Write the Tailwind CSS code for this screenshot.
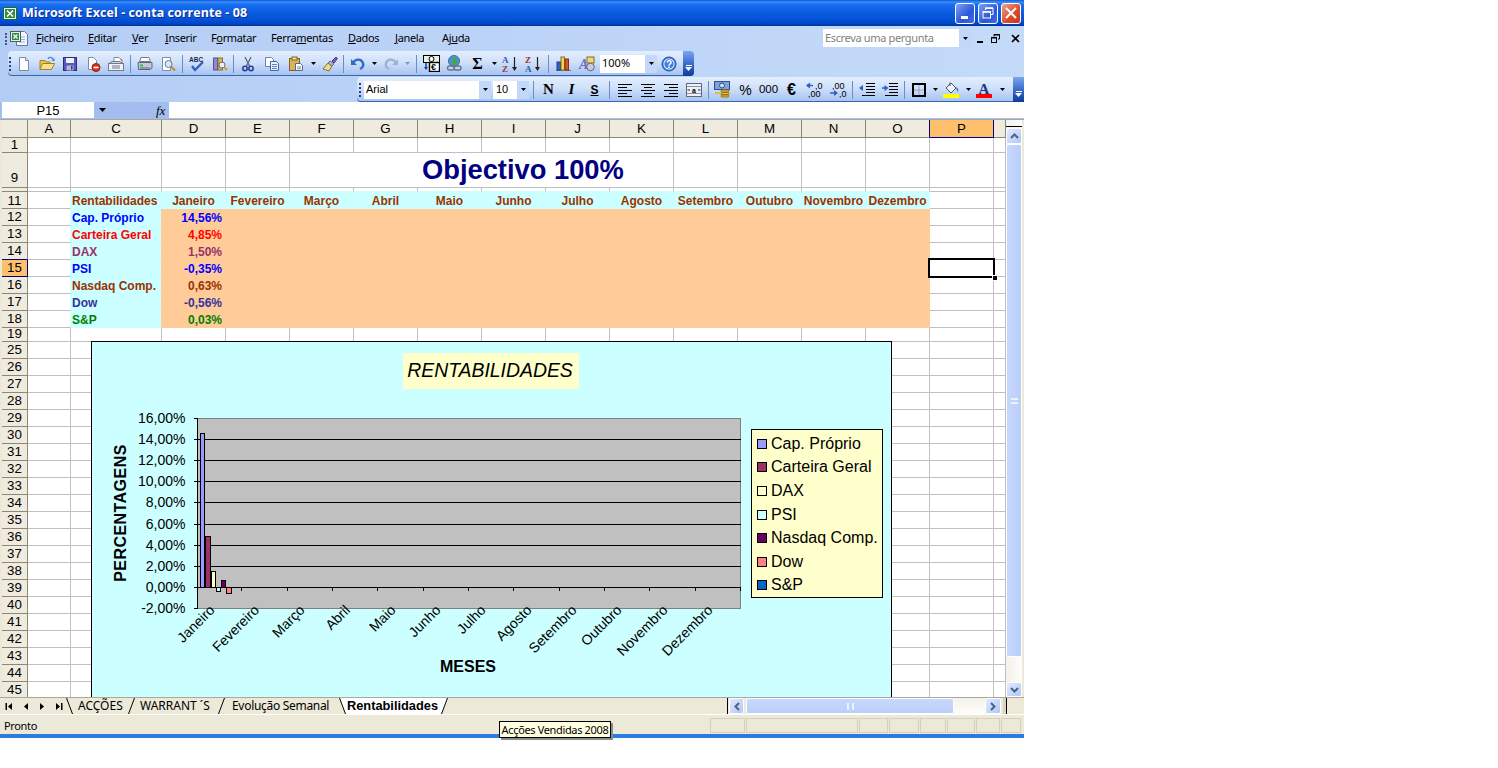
<!DOCTYPE html>
<html lang="pt">
<head>
<meta charset="utf-8">
<title>Microsoft Excel - conta corrente - 08</title>
<script src="https://cdn.jsdelivr.net/npm/@tailwindcss/browser@4"></script>
</head>
<body class="bg-white font-['Liberation_Sans',sans-serif] text-black">
<div class="relative w-[1498px] h-[768px] overflow-hidden bg-white">
<div class="w-[1024px] h-[738px] flex flex-col bg-[linear-gradient(90deg,#b4cdf5,#c4daf9)]">

<!-- title bar -->
<div class="h-[26px] flex items-center bg-[linear-gradient(180deg,#0a5ad8_0,#3c8dfb_8%,#1a6ff0_16%,#0a5be0_50%,#0552d8_75%,#0047c8_90%,#00339a_100%)]">
  <svg class="w-[14px] h-[13px] ml-[3px]" viewBox="0 0 14 13"><rect x=".5" y=".5" width="13" height="12" fill="#f0f8ea" stroke="#1d6b2e"/><rect x="2" y="2" width="10" height="9" fill="#2f8f46"/><path d="M4 3.500l6 6M10 3.500l-6 6" stroke="#fff" stroke-width="1.600"/></svg>
  <span class="ml-[5px] text-white font-['Open_Sans',sans-serif] font-bold text-[12.5px] tracking-[0.07px] whitespace-nowrap [text-shadow:1px_1px_#0f2a89]">Microsoft Excel - conta corrente - 08</span>
  <div class="ml-auto mr-[3px] flex gap-[3px]">
    <span class="w-[20px] h-[21px] rounded-[3px] border border-white bg-[linear-gradient(135deg,#7fa2f5,#2a57d8_60%,#3f6de6)] flex items-end pl-[5px] pb-[4px]"><i class="block w-[7px] h-[3px] bg-white"></i></span>
    <span class="w-[20px] h-[21px] rounded-[3px] border border-white bg-[linear-gradient(135deg,#7fa2f5,#2a57d8_60%,#3f6de6)] flex items-center justify-center"><svg class="w-[12px] h-[12px]" viewBox="0 0 12 12" fill="none" stroke="#fff"><path d="M3.500 3V1h7.500v6.500H9" stroke-width="1"/><path d="M3 1.200h8" stroke-width="1.600"/><rect x="1" y="4.500" width="7.500" height="6.500" stroke-width="1"/><path d="M1 5h7.500" stroke-width="1.600"/></svg></span>
    <span class="w-[20px] h-[21px] rounded-[3px] border border-white bg-[linear-gradient(135deg,#f0a38c,#d9492a_60%,#c93a1c)] flex items-center justify-center"><svg class="w-[12px] h-[12px]" viewBox="0 0 12 12" stroke="#fff" stroke-width="2"><path d="M1 1l10 10M11 1L1 11"/></svg></span>
  </div>
</div>

<!-- menu bar -->
<div class="h-[25px] flex items-center text-[11px] tracking-[-0.35px] font-['Noto_Sans',sans-serif] text-black">
  <span class="ml-[5px] w-[2px] h-[12px] border-l-2 border-dotted border-[#39568e]"></span>
  <svg class="ml-[3px] w-[18px] h-[17px]" viewBox="0 0 18 17"><path d="M6.500 1.500h8l3 3v11h-11z" fill="#f4f7fc" stroke="#66789a"/><path d="M9 7h6M9 9.500h6M9 12h6" stroke="#9fb0cc"/><rect x=".5" y="1.500" width="10" height="10" fill="#e6f2e0" stroke="#4f5b66"/><rect x="2" y="3" width="7" height="7" fill="#2d8f45"/><path d="M3.500 4.500l4 4M7.500 4.500l-4 4" stroke="#fff" stroke-width="1.200"/></svg>
  <span class="ml-[8px] w-[52px]"><u>F</u>icheiro</span>
  <span class="w-[44px]"><u>E</u>ditar</span>
  <span class="w-[33px]"><u>V</u>er</span>
  <span class="w-[46px]"><u>I</u>nserir</span>
  <span class="w-[60px]">F<u>o</u>rmatar</span>
  <span class="w-[77px]">Ferra<u>m</u>entas</span>
  <span class="w-[47px]"><u>D</u>ados</span>
  <span class="w-[47px]"><u>J</u>anela</span>
  <span class="w-[50px]">Aj<u>u</u>da</span>
  <div class="ml-[331px] w-[148px] h-[18px] bg-white flex items-center justify-between text-[#7f7f7f] pl-[2px] mt-[-1px]">
    <span>Escreva uma pergunta</span>
    <span class="w-[12px] h-full bg-[#c3d8f8] flex items-center justify-center"><svg class="w-[5px] h-[3px]" viewBox="0 0 5 3"><path d="M0 0h5L2.500 3z"/></svg></span>
  </div>
  <svg class="ml-[5px] w-[9px] h-[9px]" viewBox="0 0 9 9"><path d="M1 7h6v2H1z"/></svg>
  <svg class="ml-[6px] w-[9px] h-[9px]" viewBox="0 0 9 9" fill="none" stroke="#000"><path d="M3 2.500V.5h5.500v4.500H7"/><path d="M3 1h5.500" /><rect x=".5" y="3.500" width="5" height="5"/><path d="M.5 4h5"/></svg>
  <svg class="ml-[11px] w-[9px] h-[9px]" viewBox="0 0 9 9" stroke="#000" stroke-width="1.700"><path d="M1 1l7 7M8 1L1 8"/></svg>
</div>

<!-- standard toolbar -->
<div class="ml-[8px] w-[686px] h-[25px] flex items-center rounded-[4px] shadow-[inset_0_-1px_#3d64a8] bg-[linear-gradient(180deg,#e4effe,#cfe0fa_45%,#a3c1f0)] text-[11px]">
  <span class="ml-[1px] w-[3px] h-[14px] border-l-2 border-dotted border-[#27418a]"></span>
  <span class="w-[23px] flex justify-center"><svg class="size-4" viewBox="0 0 16 16"><path d="M3.500 1.500h6l3 3v10h-9z" fill="#fff" stroke="#7d8ca6"/><path d="M9.500 1.500v3h3" fill="#dfe7f5" stroke="#7d8ca6"/></svg></span>
  <span class="w-[23px] flex justify-center"><svg class="size-4" viewBox="0 0 16 16"><path d="M1 13.500V4.500h5l1 1.500h4v1.500" fill="#f0c850" stroke="#a5802a"/><path d="M1 13.500l2.500-6h12l-3 6z" fill="#fbe08a" stroke="#a5802a"/><path d="M9 3c1-2 3-2 4.500-.5l1 1.500" fill="none" stroke="#4a7fd0" stroke-width="1.200"/><path d="M15.500 2v3h-3z" fill="#4a7fd0"/></svg></span>
  <span class="w-[23px] flex justify-center"><svg class="size-4" viewBox="0 0 16 16"><rect x="1.500" y="1.500" width="13" height="13" fill="#5858bd" stroke="#2b2b80"/><rect x="4" y="2" width="8" height="5" fill="#eef1fb"/><rect x="4.500" y="9.500" width="7" height="5" fill="#b6b9d4"/><rect x="9" y="10" width="1.500" height="3.500" fill="#33337f"/></svg></span>
  <span class="w-[23px] flex justify-center"><svg class="size-4" viewBox="0 0 16 16"><path d="M3.500 1.500h5l3 3v9h-8z" fill="#fff" stroke="#7d8ca6"/><circle cx="11" cy="11.500" r="4" fill="#d8321e" stroke="#8e1d10"/><path d="M8.500 11.500h5" stroke="#fff" stroke-width="1.600"/></svg></span>
  <span class="w-[23px] flex justify-center"><svg class="size-4" viewBox="0 0 16 16"><path d="M6 1.500h5l3 3v4H6z" fill="#fff" stroke="#7d8ca6"/><path d="M1 7.500l3-2h8l3 2" fill="#d5dbe6" stroke="#6f7a8e"/><rect x=".5" y="7.500" width="15" height="7" fill="#eef1f7" stroke="#6f7a8e"/><path d="M4 10h8M4 12h8" stroke="#6f7a8e"/><path d="M12 3h2v2" fill="#e05030"/></svg></span>
  <span class="w-[6px] flex justify-center"><i class="block w-[1px] h-[18px] bg-[#6a8cc8]"></i></span>
  <span class="w-[23px] flex justify-center"><svg class="size-4" viewBox="0 0 16 16"><path d="M4 1.500h8l1.500 4h-11z" fill="#fff" stroke="#6f7a8e"/><path d="M1 6.500h14v5.500l-2 1.500H1.500z" fill="#c3c9d6" stroke="#5d6678"/><rect x="3" y="8.500" width="3" height="2" fill="#27c44a"/><path d="M3 12h10" stroke="#5d6678"/></svg></span>
  <span class="w-[23px] flex justify-center"><svg class="size-4" viewBox="0 0 16 16"><path d="M2.500 1.500h8v13h-8z" fill="#fff" stroke="#7d8ca6"/><circle cx="8.500" cy="8" r="3.500" fill="#d7e6fb" stroke="#6a7a98"/><path d="M11 10.500l4 4" stroke="#c98a24" stroke-width="2.200"/></svg></span>
  <span class="w-[6px] flex justify-center"><i class="block w-[1px] h-[18px] bg-[#6a8cc8]"></i></span>
  <span class="w-[23px] flex justify-center"><svg class="size-4" viewBox="0 0 16 16"><text x="0" y="6" font-size="6.500" font-weight="700" fill="#1c2a4a" font-family="Liberation Sans">ABC</text><path d="M3 10l3 4 8-8" fill="none" stroke="#2f5fc4" stroke-width="2.400"/></svg></span>
  <span class="w-[23px] flex justify-center"><svg class="size-4" viewBox="0 0 16 16"><rect x="1.500" y="2" width="4" height="12" fill="#8d8ad0" stroke="#55548e"/><rect x="6" y="2" width="4.500" height="12" fill="#d7b75b" stroke="#8a7230"/><circle cx="10" cy="9" r="3" fill="#e6effb" stroke="#667"/><path d="M12 11l3 3" stroke="#d09a2c" stroke-width="2"/></svg></span>
  <span class="w-[5px] flex justify-center"><i class="block w-[1px] h-[18px] bg-[#6a8cc8]"></i></span>
  <span class="w-[24px] flex justify-center"><svg class="size-4" viewBox="0 0 16 16" fill="none"><path d="M5 1l4.500 9M11 1L6.500 10" stroke="#5c6475" stroke-width="1.300"/><circle cx="5" cy="12.500" r="2.200" stroke="#27379a" stroke-width="1.500"/><circle cx="11" cy="12.500" r="2.200" stroke="#27379a" stroke-width="1.500"/></svg></span>
  <span class="w-[24px] flex justify-center"><svg class="size-4" viewBox="0 0 16 16"><path d="M1.500 1.500h6l2 2v7h-8z" fill="#fff" stroke="#6884b6"/><path d="M6.500 5.500h6l2 2v7h-8z" fill="#e9f1fd" stroke="#3f66ae"/><path d="M8 8.500h5M8 10.500h5M8 12.500h5" stroke="#5d84c6"/></svg></span>
  <span class="w-[24px] flex justify-center"><svg class="size-4" viewBox="0 0 16 16"><rect x="1.500" y="2.500" width="10" height="12" fill="#dcb25a" stroke="#82601e"/><rect x="4" y="1" width="5" height="3" fill="#f0e2ae" stroke="#82601e"/><path d="M7.500 7.500h5l2 2v5h-7z" fill="#fff" stroke="#5a6a88"/><path d="M9 11h4M9 12.800h4" stroke="#7d8ca6"/></svg></span>
  <span class="w-[10px] flex justify-center"><svg class="w-[5px] h-[3px]" viewBox="0 0 5 3"><path d="M0 0h5L2.500 3z"/></svg></span>
  <span class="w-[23px] flex justify-center"><svg class="size-4" viewBox="0 0 16 16"><path d="M1 13l5-6 4 3-3 5z" fill="#f2d98a" stroke="#8a7230"/><path d="M6 7l2-2 4 3-2 2z" fill="#b9b9cc" stroke="#66668a"/><path d="M10 5l4-4 1.500 1.500L12 7z" fill="#7a62ba" stroke="#49387e"/></svg></span>
  <span class="w-[5px] flex justify-center"><i class="block w-[1px] h-[18px] bg-[#6a8cc8]"></i></span>
  <span class="w-[23px] flex justify-center"><svg class="size-4" viewBox="0 0 16 16" fill="none"><path d="M3 7c2-4 8-5 10 0 1 3-1 5-3 6" stroke="#2f6ccc" stroke-width="2.400"/><path d="M1 3v6h6z" fill="#2f6ccc"/></svg></span>
  <span class="w-[10px] flex justify-center"><svg class="w-[5px] h-[3px]" viewBox="0 0 5 3"><path d="M0 0h5L2.500 3z"/></svg></span>
  <span class="w-[23px] flex justify-center"><svg class="size-4" viewBox="0 0 16 16" fill="none"><path d="M13 7C11 3 5 2 3 7c-1 3 1 5 3 6" stroke="#9db3d4" stroke-width="2.400"/><path d="M15 3v6H9z" fill="#9db3d4"/></svg></span>
  <span class="w-[10px] flex justify-center"><svg class="w-[5px] h-[3px]" viewBox="0 0 5 3"><path d="M0 0h5L2.500 3z" fill="#8397b8"/></svg></span>
  <span class="w-[8px] flex justify-center"><i class="block w-[1px] h-[18px] bg-[#6a8cc8]"></i></span>
  <span class="w-[23px] flex justify-center"><svg class="w-[17px] h-[17px]" viewBox="0 0 17 17"><rect x=".5" y=".5" width="16" height="7" fill="#e8f2e4" stroke="#000"/><circle cx="8.500" cy="4" r="2.500" fill="#fff" stroke="#000"/><path d="M3 8v6" stroke="#1c3bb0" stroke-width="1.500"/><path d="M1 12h4l-2 3z" fill="#1c3bb0"/><rect x="6.500" y="7.500" width="10" height="9" fill="#fff" stroke="#000" stroke-width="1.400"/><text x="8" y="15" font-size="9" font-weight="700" font-family="Liberation Sans">€</text></svg></span>
  <span class="w-[23px] flex justify-center"><svg class="w-[17px] h-[17px]" viewBox="0 0 17 17" fill="none"><circle cx="8" cy="6" r="5.500" fill="#4c94d8" stroke="#3b6ca8"/><path d="M5 2c2 1 3 3 1 5s1 3 3 4c2-2 3-5 1-8" fill="#47a84a"/><rect x="1.500" y="11" width="7" height="4" rx="2" stroke="#69748a" stroke-width="1.400"/><rect x="8" y="11" width="7" height="4" rx="2" stroke="#69748a" stroke-width="1.400"/></svg></span>
  <span class="w-[23px] flex justify-center font-['Liberation_Serif',serif] font-bold text-[16px] leading-none">Σ</span>
  <span class="w-[10px] flex justify-center"><svg class="w-[5px] h-[3px]" viewBox="0 0 5 3"><path d="M0 0h5L2.500 3z"/></svg></span>
  <span class="w-[23px] flex justify-center"><svg class="w-[17px] h-[18px]" viewBox="0 0 17 18"><text x="0" y="8" font-size="9" font-weight="700" fill="#2b5aa8" font-family="Liberation Serif">A</text><text x="0" y="17" font-size="9" font-weight="700" fill="#a5332e" font-family="Liberation Serif">Z</text><path d="M12.500 2v13" stroke="#222" stroke-width="1.200"/><path d="M10 12h5l-2.500 4z" fill="#222"/></svg></span>
  <span class="w-[23px] flex justify-center"><svg class="w-[17px] h-[18px]" viewBox="0 0 17 18"><text x="0" y="8" font-size="9" font-weight="700" fill="#a5332e" font-family="Liberation Serif">Z</text><text x="0" y="17" font-size="9" font-weight="700" fill="#2b5aa8" font-family="Liberation Serif">A</text><path d="M12.500 2v13" stroke="#222" stroke-width="1.200"/><path d="M10 12h5l-2.500 4z" fill="#222"/></svg></span>
  <span class="w-[7px] flex justify-center"><i class="block w-[1px] h-[18px] bg-[#6a8cc8]"></i></span>
  <span class="w-[23px] flex justify-center"><svg class="w-[17px] h-[17px]" viewBox="0 0 17 17"><path d="M1 15.500h15" stroke="#6b7690"/><rect x="2" y="7" width="3.500" height="8" fill="#2d62c6" stroke="#243a80"/><rect x="6" y="2" width="3.500" height="13" fill="#f3d94c" stroke="#7f7020"/><rect x="10" y="4" width="3.500" height="11" fill="#e25030" stroke="#81301c"/></svg></span>
  <span class="w-[23px] flex justify-center"><svg class="w-[18px] h-[17px]" viewBox="0 0 18 17"><text x="1" y="14" font-size="14" font-weight="700" font-style="italic" fill="#6a6ec8" font-family="Liberation Serif">A</text><rect x="9" y="2" width="7" height="6" fill="#f0d878" stroke="#7f7020"/><circle cx="12.500" cy="12" r="3.800" fill="#c8ccd8" stroke="#667"/></svg></span>
  <div class="ml-[2px] w-[57px] h-[18px] bg-white flex items-center justify-between pl-[2px] font-['Noto_Sans',sans-serif]"><span>100%</span><span class="w-[12px] h-full bg-[#c3d8f8] flex items-center justify-center"><svg class="w-[5px] h-[3px]" viewBox="0 0 5 3"><path d="M0 0h5L2.500 3z"/></svg></span></div>
  <span class="w-[23px] flex justify-center"><svg class="size-4" viewBox="0 0 16 16"><circle cx="8" cy="8" r="7" fill="#3f7fe0" stroke="#214f9e"/><circle cx="8" cy="8" r="5.500" fill="#fff"/><circle cx="8" cy="8" r="4.700" fill="#3f7fe0"/><text x="8" y="11.500" text-anchor="middle" font-size="10" font-weight="700" fill="#fff" font-family="Liberation Sans">?</text></svg></span>
  <span class="ml-auto w-[11px] h-full rounded-r-[4px] bg-[linear-gradient(180deg,#7ba6ec,#3a6cd0_50%,#0d3a96)] flex flex-col items-center justify-end pb-[5px] gap-[1px]"><i class="block w-[6px] h-[1px] bg-white"></i><svg class="w-[7px] h-[4px]" viewBox="0 0 7 4"><path d="M0 0h7L3.500 4z" fill="#fff"/></svg></span>
</div>

<!-- format toolbar -->
<div class="ml-[357px] mt-[1px] w-[667px] h-[25px] flex items-center rounded-l-[4px] shadow-[inset_0_-1px_#3d64a8] bg-[linear-gradient(180deg,#e4effe,#cfe0fa_45%,#a3c1f0)] text-[11px] font-['Noto_Sans',sans-serif]">
  <span class="ml-[2px] w-[5px] h-[14px] border-l-2 border-dotted border-[#27418a]"></span>
  <div class="w-[127px] h-[18px] bg-white flex items-center justify-between pl-[2px]"><span class="font-['Liberation_Sans',sans-serif]">Arial</span><span class="w-[12px] h-full bg-[#c3d8f8] flex items-center justify-center"><svg class="w-[5px] h-[3px]" viewBox="0 0 5 3"><path d="M0 0h5L2.500 3z"/></svg></span></div>
  <div class="ml-[2px] w-[36px] h-[18px] bg-white flex items-center justify-between pl-[3px]"><span class="font-['Liberation_Sans',sans-serif]">10</span><span class="w-[12px] h-full bg-[#c3d8f8] flex items-center justify-center"><svg class="w-[5px] h-[3px]" viewBox="0 0 5 3"><path d="M0 0h5L2.500 3z"/></svg></span></div>
  <span class="w-[8px] flex justify-center"><i class="block w-[1px] h-[18px] bg-[#6a8cc8]"></i></span>
  <span class="w-[23px] flex justify-center font-['Liberation_Serif',serif] font-bold text-[15px] leading-none">N</span>
  <span class="w-[23px] flex justify-center font-['Liberation_Serif',serif] font-bold italic text-[15px] leading-none">I</span>
  <span class="w-[23px] flex justify-center font-['Liberation_Sans',sans-serif] font-bold text-[12px] leading-none"><u>S</u></span>
  <span class="w-[7px] flex justify-center"><i class="block w-[1px] h-[18px] bg-[#6a8cc8]"></i></span>
  <span class="w-[23px] flex justify-center"><svg class="size-4" viewBox="0 0 16 16" stroke="#000"><path d="M1 2.500h14M1 5.500h9M1 8.500h14M1 11.500h9M1 14.500h14"/></svg></span>
  <span class="w-[23px] flex justify-center"><svg class="size-4" viewBox="0 0 16 16" stroke="#000"><path d="M1 2.500h14M4 5.500h8M1 8.500h14M4 11.500h8M1 14.500h14"/></svg></span>
  <span class="w-[23px] flex justify-center"><svg class="size-4" viewBox="0 0 16 16" stroke="#000"><path d="M1 2.500h14M6 5.500h9M1 8.500h14M6 11.500h9M1 14.500h14"/></svg></span>
  <span class="w-[23px] flex justify-center"><svg class="size-4" viewBox="0 0 16 16"><rect x=".5" y="1.500" width="15" height="13" fill="#eef2f8" stroke="#5f6a80"/><path d="M1 4.500h14M1 11.500h14" stroke="#8a94a8"/><text x="8" y="10.500" text-anchor="middle" font-size="7" font-weight="700" font-family="Liberation Sans">a</text><path d="M1.500 8h2.500M12 8h2.500" stroke="#222"/></svg></span>
  <span class="w-[6px] flex justify-center"><i class="block w-[1px] h-[18px] bg-[#6a8cc8]"></i></span>
  <span class="w-[23px] flex justify-center"><svg class="w-[17px] h-[17px]" viewBox="0 0 17 17"><rect x=".5" y=".5" width="15" height="8" fill="#7ea2da" stroke="#2d4f92"/><circle cx="8" cy="4.500" r="2.500" fill="#c9dbf5" stroke="#2d4f92"/><rect x="7" y="9" width="8" height="2" rx="1" fill="#eebb33" stroke="#9a7412"/><rect x="7" y="11.500" width="8" height="2" rx="1" fill="#eebb33" stroke="#9a7412"/><rect x="7" y="14" width="8" height="2" rx="1" fill="#eebb33" stroke="#9a7412"/><rect x="1" y="11" width="5" height="2" fill="#eebb33"/></svg></span>
  <span class="w-[23px] flex justify-center font-['Liberation_Sans',sans-serif] text-[14px] leading-none">%</span>
  <span class="w-[23px] flex justify-center font-['Liberation_Sans',sans-serif] text-[11.5px] leading-none">000</span>
  <span class="w-[23px] flex justify-center font-['Liberation_Sans',sans-serif] font-bold text-[16px] leading-none">€</span>
  <span class="w-[23px] flex justify-center"><svg class="w-[18px] h-[17px]" viewBox="0 0 18 17"><path d="M1 4.500h6" stroke="#2f5fc4" stroke-width="1.500"/><path d="M4 1.500v6L0 4.500z" fill="#2f5fc4"/><text x="9" y="7.500" font-size="9" font-family="Liberation Sans">,0</text><text x="2" y="16" font-size="9" font-family="Liberation Sans">,00</text></svg></span>
  <span class="w-[23px] flex justify-center"><svg class="w-[18px] h-[17px]" viewBox="0 0 18 17"><text x="3" y="7.500" font-size="9" font-family="Liberation Sans">,00</text><path d="M1 12h5" stroke="#2f5fc4" stroke-width="1.500"/><path d="M5 9v6l4-3z" fill="#2f5fc4"/><text x="10" y="16" font-size="9" font-family="Liberation Sans">,0</text></svg></span>
  <span class="w-[6px] flex justify-center"><i class="block w-[1px] h-[18px] bg-[#6a8cc8]"></i></span>
  <span class="w-[23px] flex justify-center"><svg class="size-4" viewBox="0 0 16 16"><path d="M7 1.500h9M7 4.500h9M7 7.500h9M7 10.500h9M3 13.500h13" stroke="#000"/><path d="M1 6h3" stroke="#2f5fc4" stroke-width="1.500"/><path d="M4 3v6L0 6z" fill="#2f5fc4"/></svg></span>
  <span class="w-[23px] flex justify-center"><svg class="size-4" viewBox="0 0 16 16"><path d="M7 1.500h9M7 4.500h9M7 7.500h9M7 10.500h9M3 13.500h13" stroke="#000"/><path d="M0 6h3" stroke="#2f5fc4" stroke-width="1.500"/><path d="M2.500 3v6L6.500 6z" fill="#2f5fc4"/></svg></span>
  <span class="w-[6px] flex justify-center"><i class="block w-[1px] h-[18px] bg-[#6a8cc8]"></i></span>
  <span class="w-[23px] flex justify-center"><svg class="size-4" viewBox="0 0 16 16" fill="none"><rect x="2" y="2" width="12" height="12" stroke="#000" stroke-width="2"/><path d="M8 3.500v9M3.500 8h9" stroke="#777" stroke-dasharray="1 1"/></svg></span>
  <span class="w-[10px] flex justify-center"><svg class="w-[5px] h-[3px]" viewBox="0 0 5 3"><path d="M0 0h5L2.500 3z"/></svg></span>
  <span class="w-[23px] flex justify-center"><svg class="w-[17px] h-[17px]" viewBox="0 0 17 17"><path d="M3 7l5-5 5 5-5 5z" fill="#eef1f7" stroke="#4d566a"/><path d="M7 5V1.500" stroke="#4d566a"/><path d="M13 6c2 1 3 3 2 5-1-1-2-3-2-5z" fill="#3f72c8"/><rect x="0" y="13" width="16" height="4" fill="#ffff00"/></svg></span>
  <span class="w-[10px] flex justify-center"><svg class="w-[5px] h-[3px]" viewBox="0 0 5 3"><path d="M0 0h5L2.500 3z"/></svg></span>
  <span class="w-[23px] flex justify-center"><svg class="w-[17px] h-[17px]" viewBox="0 0 17 17"><text x="8" y="12.500" text-anchor="middle" font-size="15" font-weight="700" fill="#1d3880" font-family="Liberation Serif">A</text><rect x="0" y="13" width="16" height="4" fill="#ff0000"/></svg></span>
  <span class="w-[12px] flex justify-center"><svg class="w-[5px] h-[3px]" viewBox="0 0 5 3"><path d="M0 0h5L2.500 3z"/></svg></span>
  <span class="ml-auto w-[11px] h-full bg-[linear-gradient(180deg,#7ba6ec,#3a6cd0_50%,#0d3a96)] flex flex-col items-center justify-end pb-[5px] gap-[1px]"><i class="block w-[6px] h-[1px] bg-white"></i><svg class="w-[7px] h-[4px]" viewBox="0 0 7 4"><path d="M0 0h7L3.500 4z" fill="#fff"/></svg></span>
</div>

<!-- formula bar -->
<div class="h-[17px] flex bg-[#a3bdf1] border-b border-[#a3bdf1]">
  <div class="ml-[2px] w-[92px] bg-white text-center text-[13px] leading-[17px]">P15</div>
  <div class="w-[75px] relative flex items-center">
    <svg class="ml-[5px] w-[7px] h-[4px]" viewBox="0 0 7 4"><path d="M0 0h7L3.500 4z"/></svg>
    <span class="ml-[50px] font-['Liberation_Serif',serif] italic text-[13px] leading-none">fx</span>
  </div>
  <div class="flex-1 bg-white"></div>
</div>
<div class="h-[1px] bg-[#aca899]"></div>

<!-- sheet + vertical scrollbar -->
<div class="h-[577px] flex bg-[#ece9d8]">
  <div class="ml-[2px] w-[1004px] h-full relative overflow-hidden bg-white">
    <table class="table-fixed w-[1004px] border-separate border-spacing-0 text-[13.33px] leading-none [&_td]:p-0 [&_td]:border-r [&_td]:border-b [&_td]:border-[#c0c0c0] [&_th]:p-0 [&_th]:border-r [&_th]:border-b [&_th]:border-[#8b8874] [&_th]:bg-[#efebde] [&_th]:font-normal [&_th]:text-center">
      <colgroup><col class="w-[26px]"><col class="w-[43px]"><col class="w-[91px]"><col class="w-[64px]"><col class="w-[64px]"><col class="w-[64px]"><col class="w-[64px]"><col class="w-[64px]"><col class="w-[64px]"><col class="w-[64px]"><col class="w-[64px]"><col class="w-[64px]"><col class="w-[64px]"><col class="w-[64px]"><col class="w-[64px]"><col class="w-[64px]"><col class="w-[12px]"></colgroup>
      <tr class="h-[18px]"><th></th><th>A</th><th>C</th><th>D</th><th>E</th><th>F</th><th>G</th><th>H</th><th>I</th><th>J</th><th>K</th><th>L</th><th>M</th><th>N</th><th class="border-r-[#000080]!">O</th><th class="bg-[#ffc06d]! border-[#000080]!">P</th><th></th></tr>
      <tr class="h-[15px]"><th>1</th><td></td><td></td><td></td><td></td><td></td><td></td><td></td><td></td><td></td><td></td><td></td><td></td><td></td><td></td><td></td><td></td></tr>
      <tr class="h-[35px]"><th class="pt-[15px]!">9</th><td></td><td></td><td></td><td></td><td colspan="6" class="text-left pl-[132px]! whitespace-nowrap text-[27.3px] font-bold text-[#000080]">Objectivo 100%</td><td></td><td></td><td></td><td></td><td></td><td></td></tr>
      <tr class="h-[4px]"><th></th><td></td><td class="border-b-[#ccffff]!"></td><td class="border-b-[#ccffff]!"></td><td class="border-b-[#ccffff]!"></td><td class="border-b-[#ccffff]!"></td><td class="border-b-[#ccffff]!"></td><td class="border-b-[#ccffff]!"></td><td class="border-b-[#ccffff]!"></td><td class="border-b-[#ccffff]!"></td><td class="border-b-[#ccffff]!"></td><td class="border-b-[#ccffff]!"></td><td class="border-b-[#ccffff]!"></td><td class="border-b-[#ccffff]!"></td><td class="border-b-[#ccffff]!"></td><td></td><td></td></tr>
      <tr class="h-[17px] text-[12px] font-bold text-[#993300] text-center [&>td:nth-child(n+3):nth-child(-n+15)]:bg-[#ccffff] [&>td:nth-child(n+3):nth-child(-n+15)]:border-[#ccffff] [&>td:nth-child(n+3):nth-child(-n+15)]:pt-[2px]!"><th class="text-[13.33px] text-black pt-[1px]!">11</th><td class="border-r-[#ccffff]!"></td><td class="text-left pl-[1px]!">Rentabilidades</td><td>Janeiro</td><td>Fevereiro</td><td>Março</td><td>Abril</td><td>Maio</td><td>Junho</td><td>Julho</td><td>Agosto</td><td>Setembro</td><td>Outubro</td><td>Novembro</td><td>Dezembro</td><td></td><td></td></tr>
      <tr class="h-[17px] text-[12px] font-bold"><th class="text-[13.33px]">12</th><td class="border-r-[#ccffff]!"></td><td class="bg-[#ccffff] border-[#ccffff]! border-r-[#ffcc99]! text-[#0000ff] pl-[1px]! pt-[2px]!">Cap. Próprio</td><td class="bg-[#ffcc99] border-[#ffcc99]! text-right pr-[3px]! pt-[2px]! text-[#0000ff]">14,56%</td><td colspan="11" rowspan="7" class="bg-[#ffcc99] border-[#ffcc99]!"></td><td></td><td></td></tr>
      <tr class="h-[17px] text-[12px] font-bold"><th class="text-[13.33px]">13</th><td class="border-r-[#ccffff]!"></td><td class="bg-[#ccffff] border-[#ccffff]! border-r-[#ffcc99]! text-[#ff0000] pl-[1px]! pt-[2px]!">Carteira Geral</td><td class="bg-[#ffcc99] border-[#ffcc99]! text-right pr-[3px]! pt-[2px]! text-[#ff0000]">4,85%</td><td></td><td></td></tr>
      <tr class="h-[17px] text-[12px] font-bold"><th class="text-[13.33px] border-b-[#000080]!">14</th><td class="border-r-[#ccffff]!"></td><td class="bg-[#ccffff] border-[#ccffff]! border-r-[#ffcc99]! text-[#993366] pl-[1px]! pt-[2px]!">DAX</td><td class="bg-[#ffcc99] border-[#ffcc99]! text-right pr-[3px]! pt-[2px]! text-[#993366]">1,50%</td><td></td><td></td></tr>
      <tr class="h-[17px] text-[12px] font-bold"><th class="text-[13.33px] bg-[#ffc06d]! border-[#000080]!">15</th><td class="border-r-[#ccffff]!"></td><td class="bg-[#ccffff] border-[#ccffff]! border-r-[#ffcc99]! text-[#0000ff] pl-[1px]! pt-[2px]!">PSI</td><td class="bg-[#ffcc99] border-[#ffcc99]! text-right pr-[3px]! pt-[2px]! text-[#0000ff]">-0,35%</td><td></td><td></td></tr>
      <tr class="h-[17px] text-[12px] font-bold"><th class="text-[13.33px]">16</th><td class="border-r-[#ccffff]!"></td><td class="bg-[#ccffff] border-[#ccffff]! border-r-[#ffcc99]! text-[#993300] pl-[1px]! pt-[2px]!">Nasdaq Comp.</td><td class="bg-[#ffcc99] border-[#ffcc99]! text-right pr-[3px]! pt-[2px]! text-[#993300]">0,63%</td><td></td><td></td></tr>
      <tr class="h-[17px] text-[12px] font-bold"><th class="text-[13.33px]">17</th><td class="border-r-[#ccffff]!"></td><td class="bg-[#ccffff] border-[#ccffff]! border-r-[#ffcc99]! text-[#333399] pl-[1px]! pt-[2px]!">Dow</td><td class="bg-[#ffcc99] border-[#ffcc99]! text-right pr-[3px]! pt-[2px]! text-[#333399]">-0,56%</td><td></td><td></td></tr>
      <tr class="h-[17px] text-[12px] font-bold"><th class="text-[13.33px]">18</th><td class="border-r-[#ccffff]!"></td><td class="bg-[#ccffff] border-[#ccffff]! border-r-[#ffcc99]! text-[#008000] pl-[1px]! pt-[2px]!">S&amp;P</td><td class="bg-[#ffcc99] border-[#ffcc99]! text-right pr-[3px]! pt-[2px]! text-[#008000]">0,03%</td><td></td><td></td></tr>
      <tr class="h-[14px]"><th class="leading-[12px] pb-[1px]!">19</th><td></td><td></td><td></td><td></td><td></td><td></td><td></td><td></td><td></td><td></td><td></td><td></td><td></td><td></td><td></td><td></td></tr>
      <tr class="h-[17px]"><th>25</th><td></td><td></td><td></td><td></td><td></td><td></td><td></td><td></td><td></td><td></td><td></td><td></td><td></td><td></td><td></td><td></td></tr>
      <tr class="h-[17px]"><th>26</th><td></td><td></td><td></td><td></td><td></td><td></td><td></td><td></td><td></td><td></td><td></td><td></td><td></td><td></td><td></td><td></td></tr>
      <tr class="h-[17px]"><th>27</th><td></td><td></td><td></td><td></td><td></td><td></td><td></td><td></td><td></td><td></td><td></td><td></td><td></td><td></td><td></td><td></td></tr>
      <tr class="h-[17px]"><th>28</th><td></td><td></td><td></td><td></td><td></td><td></td><td></td><td></td><td></td><td></td><td></td><td></td><td></td><td></td><td></td><td></td></tr>
      <tr class="h-[17px]"><th>29</th><td></td><td></td><td></td><td></td><td></td><td></td><td></td><td></td><td></td><td></td><td></td><td></td><td></td><td></td><td></td><td></td></tr>
      <tr class="h-[17px]"><th>30</th><td></td><td></td><td></td><td></td><td></td><td></td><td></td><td></td><td></td><td></td><td></td><td></td><td></td><td></td><td></td><td></td></tr>
      <tr class="h-[17px]"><th>31</th><td></td><td></td><td></td><td></td><td></td><td></td><td></td><td></td><td></td><td></td><td></td><td></td><td></td><td></td><td></td><td></td></tr>
      <tr class="h-[17px]"><th>32</th><td></td><td></td><td></td><td></td><td></td><td></td><td></td><td></td><td></td><td></td><td></td><td></td><td></td><td></td><td></td><td></td></tr>
      <tr class="h-[17px]"><th>33</th><td></td><td></td><td></td><td></td><td></td><td></td><td></td><td></td><td></td><td></td><td></td><td></td><td></td><td></td><td></td><td></td></tr>
      <tr class="h-[17px]"><th>34</th><td></td><td></td><td></td><td></td><td></td><td></td><td></td><td></td><td></td><td></td><td></td><td></td><td></td><td></td><td></td><td></td></tr>
      <tr class="h-[17px]"><th>35</th><td></td><td></td><td></td><td></td><td></td><td></td><td></td><td></td><td></td><td></td><td></td><td></td><td></td><td></td><td></td><td></td></tr>
      <tr class="h-[17px]"><th>36</th><td></td><td></td><td></td><td></td><td></td><td></td><td></td><td></td><td></td><td></td><td></td><td></td><td></td><td></td><td></td><td></td></tr>
      <tr class="h-[17px]"><th>37</th><td></td><td></td><td></td><td></td><td></td><td></td><td></td><td></td><td></td><td></td><td></td><td></td><td></td><td></td><td></td><td></td></tr>
      <tr class="h-[17px]"><th>38</th><td></td><td></td><td></td><td></td><td></td><td></td><td></td><td></td><td></td><td></td><td></td><td></td><td></td><td></td><td></td><td></td></tr>
      <tr class="h-[17px]"><th>39</th><td></td><td></td><td></td><td></td><td></td><td></td><td></td><td></td><td></td><td></td><td></td><td></td><td></td><td></td><td></td><td></td></tr>
      <tr class="h-[17px]"><th>40</th><td></td><td></td><td></td><td></td><td></td><td></td><td></td><td></td><td></td><td></td><td></td><td></td><td></td><td></td><td></td><td></td></tr>
      <tr class="h-[17px]"><th>41</th><td></td><td></td><td></td><td></td><td></td><td></td><td></td><td></td><td></td><td></td><td></td><td></td><td></td><td></td><td></td><td></td></tr>
      <tr class="h-[17px]"><th>42</th><td></td><td></td><td></td><td></td><td></td><td></td><td></td><td></td><td></td><td></td><td></td><td></td><td></td><td></td><td></td><td></td></tr>
      <tr class="h-[17px]"><th>43</th><td></td><td></td><td></td><td></td><td></td><td></td><td></td><td></td><td></td><td></td><td></td><td></td><td></td><td></td><td></td><td></td></tr>
      <tr class="h-[17px]"><th>44</th><td></td><td></td><td></td><td></td><td></td><td></td><td></td><td></td><td></td><td></td><td></td><td></td><td></td><td></td><td></td><td></td></tr>
      <tr class="h-[17px]"><th>45</th><td></td><td></td><td></td><td></td><td></td><td></td><td></td><td></td><td></td><td></td><td></td><td></td><td></td><td></td><td></td><td></td></tr>
    </table>

    <!-- selected cell -->
    <div class="absolute left-[926px] top-[138px] w-[67px] h-[20px] border-2 border-black"><i class="absolute right-[-5px] bottom-[-5px] block w-[6px] h-[6px] bg-black border border-white"></i></div>

    <!-- chart -->
    <div class="absolute left-[89px] top-[221px] w-[801px] h-[370px] bg-[#ccffff] border border-black">
      <svg class="absolute left-[-1px] top-[-1px]" width="801" height="370" viewBox="91 341 801 370" font-family="Liberation Sans">
        <rect x="197.500" y="418.500" width="543" height="190" fill="#c0c0c0" stroke="#808080"/>
        <g stroke="#000" shape-rendering="crispEdges"><path d="M197 439.500h544M197 460.500h544M197 481.500h544M197 502.500h544M197 524.500h544M197 545.500h544M197 566.500h544M197 587.500h544"/>
        <path d="M194 418.500h4M194 439.500h4M194 460.500h4M194 481.500h4M194 502.500h4M194 524.500h4M194 545.500h4M194 566.500h4M194 587.500h4M194 608.500h4M197.500 418v190"/>
        <path d="M241.500 587v4M287.500 587v4M332.500 587v4M377.500 587v4M423.500 587v4M468.500 587v4M513.500 587v4M559.500 587v4M604.500 587v4M649.500 587v4M695.500 587v4M740.500 587v4"/></g>
        <g stroke="#000" shape-rendering="crispEdges">
          <rect x="200.500" y="433.500" width="4" height="154" fill="#9999ff"/>
          <rect x="205.500" y="536.500" width="5" height="51" fill="#993366"/>
          <rect x="211.500" y="571.500" width="4" height="16" fill="#ffffcc"/>
          <rect x="216.500" y="587.500" width="4" height="4" fill="#ccffff"/>
          <rect x="221.500" y="580.500" width="4" height="7" fill="#660066"/>
          <rect x="226.500" y="587.500" width="5" height="6" fill="#ff8080"/>
        </g>
        <g font-size="14" text-anchor="end">
          <text x="185.500" y="423">16,00%</text><text x="185.500" y="444">14,00%</text><text x="185.500" y="465">12,00%</text><text x="185.500" y="486">10,00%</text><text x="185.500" y="507">8,00%</text><text x="185.500" y="529">6,00%</text><text x="185.500" y="550">4,00%</text><text x="185.500" y="571">2,00%</text><text x="185.500" y="592">0,00%</text><text x="185.500" y="613">-2,00%</text>
        </g>
        <g font-size="14" text-anchor="end">
          <text x="215.500" y="611" transform="rotate(-45 215.500 611)">Janeiro</text>
          <text x="260" y="611" transform="rotate(-45 260 611)">Fevereiro</text>
          <text x="305.500" y="611" transform="rotate(-45 305.500 611)">Março</text>
          <text x="351" y="611" transform="rotate(-45 351 611)">Abril</text>
          <text x="396.500" y="611" transform="rotate(-45 396.500 611)">Maio</text>
          <text x="441.500" y="611" transform="rotate(-45 441.500 611)">Junho</text>
          <text x="486.500" y="611" transform="rotate(-45 486.500 611)">Julho</text>
          <text x="532.500" y="611" transform="rotate(-45 532.500 611)">Agosto</text>
          <text x="577.500" y="611" transform="rotate(-45 577.500 611)">Setembro</text>
          <text x="622.500" y="611" transform="rotate(-45 622.500 611)">Outubro</text>
          <text x="668.500" y="611" transform="rotate(-45 668.500 611)">Novembro</text>
          <text x="713.500" y="611" transform="rotate(-45 713.500 611)">Dezembro</text>
        </g>
        <text x="126" y="513" font-size="16" font-weight="700" letter-spacing=".45" text-anchor="middle" transform="rotate(-90 126 513)">PERCENTAGENS</text>
        <text x="468" y="672" font-size="16" font-weight="700" text-anchor="middle">MESES</text>
      </svg>
      <div class="absolute left-[311px] top-[11px] w-[176px] h-[36px] bg-[#ffffcc] flex items-center justify-center pr-[2px] italic text-[19.4px] leading-none">RENTABILIDADES</div>
      <div class="absolute left-[659px] top-[87px] w-[132px] h-[169px] bg-[#ffffcc] border border-black flex flex-col pt-[2px] pl-[5px] text-[16px] leading-none">
        <div class="h-[24px] flex items-center gap-[4px]"><i class="block w-[10px] h-[10px] border border-black bg-[#9999ff]"></i>Cap. Próprio</div>
        <div class="h-[24px] flex items-center gap-[4px]"><i class="block w-[10px] h-[10px] border border-black bg-[#993366]"></i>Carteira Geral</div>
        <div class="h-[24px] flex items-center gap-[4px]"><i class="block w-[10px] h-[10px] border border-black bg-[#ffffcc]"></i>DAX</div>
        <div class="h-[24px] flex items-center gap-[4px]"><i class="block w-[10px] h-[10px] border border-black bg-[#ccffff]"></i>PSI</div>
        <div class="h-[24px] flex items-center gap-[4px]"><i class="block w-[10px] h-[10px] border border-black bg-[#660066]"></i>Nasdaq Comp.</div>
        <div class="h-[24px] flex items-center gap-[4px]"><i class="block w-[10px] h-[10px] border border-black bg-[#ff8080]"></i>Dow</div>
        <div class="h-[24px] flex items-center gap-[4px]"><i class="block w-[10px] h-[10px] border border-black bg-[#0066cc]"></i>S&amp;P</div>
      </div>
    </div>
  </div>

  <!-- vertical scrollbar -->
  <div class="w-[16px] h-full flex flex-col bg-[linear-gradient(90deg,#f3f1ea,#fdfdfb)]">
    <div class="h-[8px] flex items-end pb-[1px]"><i class="block w-full h-[1px] bg-black"></i></div>
    <div class="h-[16px] rounded-[2px] border border-white bg-[linear-gradient(135deg,#e1eaff,#aec8f7)] flex items-center justify-center"><svg class="w-[9px] h-[6px]" viewBox="0 0 9 6" fill="none" stroke="#4d6185" stroke-width="2"><path d="M1 5l3.500-3.500L8 5"/></svg></div>
    <div class="h-[513px] rounded-[2px] border border-white bg-[linear-gradient(90deg,#c8d8fd,#b9cef9)] flex items-center justify-center"><i class="block w-[7px] h-[6px] border-y-2 border-[#edf2fe]"></i></div>
    <div class="flex-1"></div>
    <div class="h-[15px] rounded-[2px] border border-white bg-[linear-gradient(135deg,#e1eaff,#aec8f7)] flex items-center justify-center"><svg class="w-[9px] h-[6px]" viewBox="0 0 9 6" fill="none" stroke="#4d6185" stroke-width="2"><path d="M1 1l3.500 3.500L8 1"/></svg></div>
  </div>
</div>

<!-- sheet tabs -->
<div class="h-[17px] flex items-center bg-[#ece9d8] border-t border-[#aca899] text-[12px] font-['Noto_Sans',sans-serif] relative">
  <div class="ml-[5px] w-[61px] flex items-center">
    <svg class="w-[8px] h-[7px]" viewBox="0 0 8 7"><path d="M.5 0h1.500v7H.5zM7 0v7L3 3.500z"/></svg>
    <svg class="ml-[11px] w-[4px] h-[7px]" viewBox="0 0 4 7"><path d="M4 0v7L0 3.500z"/></svg>
    <svg class="ml-[12px] w-[4px] h-[7px]" viewBox="0 0 4 7"><path d="M0 0v7l4-3.500z"/></svg>
    <svg class="ml-[11px] w-[8px] h-[7px]" viewBox="0 0 8 7"><path d="M1 0v7l4-3.500zM6 0h1.500v7H6z"/></svg>
  </div>
  <svg class="w-[7px] h-[16px]" viewBox="0 0 7 16" fill="none" stroke="#000"><path d="M.5 0l6 16"/></svg>
  <span class="ml-[5px] w-[50px]">ACÇÕES</span>
  <svg class="w-[7px] h-[16px]" viewBox="0 0 7 16" fill="none" stroke="#000"><path d="M6.500 0L.5 16"/></svg>
  <span class="ml-[5px] w-[78px]">WARRANT ´S</span>
  <svg class="w-[7px] h-[16px]" viewBox="0 0 7 16" fill="none" stroke="#000"><path d="M6.500 0L.5 16"/></svg>
  <span class="ml-[7px] w-[107px] whitespace-nowrap tracking-[-0.3px]">Evolução Semanal</span>
  <div class="relative w-[109px] h-[16px] flex items-center pl-[8px] font-bold text-[12.8px] leading-none font-['Liberation_Sans',sans-serif]">
    <svg class="absolute left-0 top-0" width="109" height="16" viewBox="0 0 109 16"><path d="M.5 0L6.500 16H102.500L108.500 0z" fill="#fff"/><path d="M.5 0L6.500 16M108.500 0L102.500 16" fill="none" stroke="#000"/></svg>
    <span class="relative">Rentabilidades</span>
  </div>
  <div class="absolute left-[727px] top-0 h-[16px] w-[280px] flex items-center border-x border-black">
    <span class="w-[15px] h-full ml-[1px] rounded-[2px] border border-white bg-[linear-gradient(135deg,#e1eaff,#aec8f7)] flex items-center justify-center"><svg class="w-[6px] h-[9px]" viewBox="0 0 6 9" fill="none" stroke="#4d6185" stroke-width="2"><path d="M5 1L1.500 4.500 5 8"/></svg></span>
    <span class="ml-[2px] w-[208px] h-full rounded-[2px] border border-white bg-[linear-gradient(180deg,#c8d8fd,#b9cef9)] flex items-center justify-center"><i class="block w-[7px] h-[7px] border-x-2 border-[#edf2fe]"></i></span>
    <span class="flex-1 h-full bg-[linear-gradient(180deg,#f3f1ea,#fdfdfb)]"></span>
    <span class="w-[16px] h-full rounded-[2px] border border-white bg-[linear-gradient(135deg,#e1eaff,#aec8f7)] flex items-center justify-center"><svg class="w-[6px] h-[9px]" viewBox="0 0 6 9" fill="none" stroke="#4d6185" stroke-width="2"><path d="M1 1l3.500 3.500L1 8"/></svg></span>
    <span class="ml-[2px] w-[3px] h-full bg-[#d8d4c4]"></span>
  </div>
</div>

<!-- status bar -->
<div class="h-[20px] flex items-start bg-[#ece9d8] border-t border-white text-[11px] tracking-[-0.35px] font-['Noto_Sans',sans-serif]">
  <span class="ml-[4px] mt-[3px] leading-[16px]">Pronto</span>
  <div class="ml-auto mr-[3px] mt-[3px] h-[15px] flex gap-[1px] [&>i]:block [&>i]:h-full [&>i]:border [&>i]:border-[#d4d0c0]">
    <i class="w-[35px]"></i><i class="w-[112px]"></i><i class="w-[29px]"></i><i class="w-[30px]"></i><i class="w-[26px]"></i><i class="w-[28px]"></i><i class="w-[24px]"></i><i class="w-[20px]"></i>
  </div>
</div>
<div class="h-[4px] bg-[#2c7bdf]"></div>
</div>

<!-- tooltip -->
<div class="absolute left-[499px] top-[721px] w-[112px] h-[17px] bg-[#ffffe1] border border-black shadow-[2px_2px_0_#8a8a8a] text-[11px] tracking-[-0.35px] leading-[15px] font-['Noto_Sans',sans-serif] text-center whitespace-nowrap">Acções Vendidas 2008</div>
</div>
</body>
</html>
